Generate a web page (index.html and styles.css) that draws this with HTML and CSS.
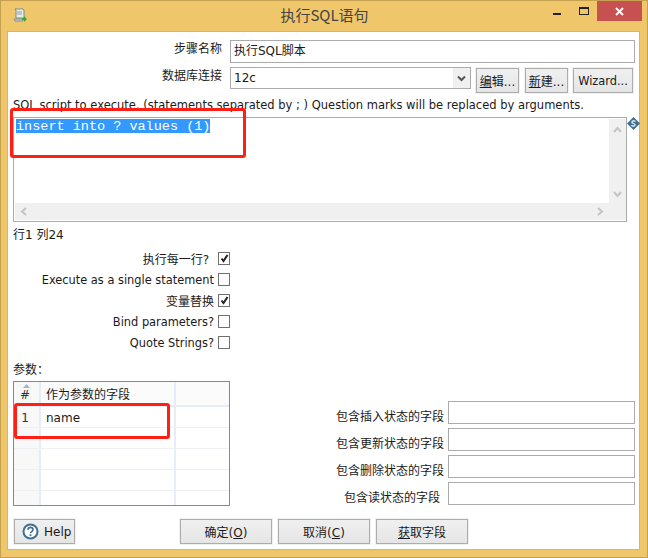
FILE: index.html
```html
<!DOCTYPE html>
<html lang="zh">
<head>
<meta charset="utf-8">
<title>执行SQL语句</title>
<link rel="stylesheet" href="styles.css">
</head>
<body>
<div class="window">
  <header class="titlebar">
    <svg class="app-icon" width="14" height="15" viewBox="0 0 14 15">
      <path d="M2 1h8l1 1v8H3V2z" fill="#e8ecec" stroke="#7f8b8b"/>
      <path d="M1 11h9v2H2z" fill="#d5dcdc" stroke="#7f8b8b"/>
      <path d="M4 4h5M4 6h5" stroke="#8fa0a0"/>
      <path d="M9 10h2V8l3 3-3 3v-2H9z" fill="#3fa535"/>
    </svg>
    <div class="title">执行SQL语句</div>
    <div class="win-controls">
      <span class="win-min"></span>
      <span class="win-max"></span>
      <span class="win-close">
        <svg width="11" height="11" viewBox="0 0 11 11"><path d="M2 2l7 7M9 2l-7 7" stroke="#fff" stroke-width="2"/></svg>
      </span>
    </div>
  </header>

  <main class="client">
    <div class="form-row name-row">
      <label class="top-label">步骤名称</label>
      <div class="input grow">执行SQL脚本</div>
    </div>
    <div class="form-row conn-row">
      <label class="top-label">数据库连接</label>
      <div class="input combo">
        <span class="combo-value">12c</span>
        <span class="combo-btn">
          <svg width="9" height="7" viewBox="0 0 9 7"><path d="M1 1.5l3.5 3.5L8 1.5" fill="none" stroke="#555" stroke-width="2"/></svg>
        </span>
      </div>
      <button class="btn small"><u>编</u>辑...</button>
      <button class="btn small"><u>新</u>建...</button>
      <button class="btn wizard latin">Wizard...</button>
    </div>

    <div class="sql-label">SQL script to execute. (statements separated by ; ) Question marks will be replaced by arguments.</div>

    <div class="sql-wrap">
      <div class="sql-box">
        <div class="sql-main">
          <div class="sql-text"><span class="selected">insert into ? values (1)</span></div>
          <div class="hscroll">
            <svg width="8" height="9" viewBox="0 0 8 9"><path d="M6 1L2 4.5 6 8" fill="none" stroke="#c4c4c4" stroke-width="2"/></svg>
            <svg width="8" height="9" viewBox="0 0 8 9"><path d="M2 1l4 3.5L2 8" fill="none" stroke="#c4c4c4" stroke-width="2"/></svg>
          </div>
        </div>
        <div class="vscroll">
          <svg width="9" height="8" viewBox="0 0 9 8"><path d="M1 6l3.5-4L8 6" fill="none" stroke="#c4c4c4" stroke-width="2"/></svg>
          <svg width="9" height="8" viewBox="0 0 9 8"><path d="M1 2l3.5 4L8 2" fill="none" stroke="#c4c4c4" stroke-width="2"/></svg>
        </div>
      </div>
      <svg class="var-icon" width="13" height="13" viewBox="0 0 13 13">
        <path d="M6.5 0L13 6.5 6.5 13 0 6.5z" fill="#3f6f92"/>
        <path d="M8.5 4.5C8 3.8 5 3.4 4.8 5c-.2 1.700 3.600 1.300 3.400 3-.2 1.500-3.200 1.300-3.800.4" fill="none" stroke="#fff" stroke-width="1.100"/>
      </svg>
      <div class="mark mark-sql"></div>
    </div>

    <div class="position">行1 列24</div>

    <div class="checks">
      <div class="check-row"><span class="check-label indent">执行每一行?</span><span class="checkbox"><svg width="9" height="9" viewBox="0 0 9 9"><path d="M1.500 4.500l2 2.500 4-6" fill="none" stroke="#222" stroke-width="2"/></svg></span></div>
      <div class="check-row"><span class="check-label latin">Execute as a single statement</span><span class="checkbox"></span></div>
      <div class="check-row"><span class="check-label">变量替换</span><span class="checkbox"><svg width="9" height="9" viewBox="0 0 9 9"><path d="M1.500 4.500l2 2.500 4-6" fill="none" stroke="#222" stroke-width="2"/></svg></span></div>
      <div class="check-row"><span class="check-label latin">Bind parameters?</span><span class="checkbox"></span></div>
      <div class="check-row"><span class="check-label latin">Quote Strings?</span><span class="checkbox"></span></div>
    </div>

    <div class="params-label">参数：</div>

    <div class="params">
      <div class="table">
        <div class="tr th">
          <div class="td c1"><svg class="sort" width="7" height="4" viewBox="0 0 7 4"><path d="M0 4l3.500-4L7 4z" fill="#9fb6cc"/></svg>#</div>
          <div class="td c2">作为参数的字段</div>
          <div class="td c3"></div>
        </div>
        <div class="tr"><div class="td c1">1</div><div class="td c2">name</div><div class="td c3"></div></div>
        <div class="tr"><div class="td c1"></div><div class="td c2"></div><div class="td c3"></div></div>
        <div class="tr"><div class="td c1"></div><div class="td c2"></div><div class="td c3"></div></div>
        <div class="tr"><div class="td c1"></div><div class="td c2"></div><div class="td c3"></div></div>
        <div class="tr last"><div class="td c1"></div><div class="td c2"></div><div class="td c3"></div></div>
        <div class="mark mark-name"></div>
      </div>
      <div class="status-fields">
        <div class="status-row"><label>包含插入状态的字段</label><div class="input status"></div></div>
        <div class="status-row"><label>包含更新状态的字段</label><div class="input status"></div></div>
        <div class="status-row"><label>包含删除状态的字段</label><div class="input status"></div></div>
        <div class="status-row"><label class="inset">包含读状态的字段</label><div class="input status"></div></div>
      </div>
    </div>

    <footer class="actions">
      <button class="btn help">
        <svg width="17" height="17" viewBox="0 0 17 17"><circle cx="8.500" cy="8.500" r="7" fill="#fff" stroke="#3f6f92" stroke-width="2"/><path d="M6 6.800c0-3.200 5-3.200 5 0 0 1.800-2.500 1.700-2.500 3.400" fill="none" stroke="#3f6f92" stroke-width="1.600"/><rect x="7.600" y="11.300" width="1.800" height="1.800" fill="#3f6f92"/></svg>
        Help
      </button>
      <div class="main-actions">
        <button class="btn action">确定(<u>O</u>)</button>
        <button class="btn action">取消(<u>C</u>)</button>
        <button class="btn action"><u>获</u>取字段</button>
      </div>
    </footer>
  </main>
</div>
</body>
</html>
```
FILE: styles.css
```css
* { box-sizing: border-box; }
html, body { margin: 0; padding: 0; }
body {
  width: 648px;
  height: 558px;
  overflow: hidden;
  font-family: "DejaVu Sans", "Noto Sans CJK SC", sans-serif;
  font-size: 12px;
  color: #1a1a1a;
}
.latin { font-size: 11.4px; }
.window {
  width: 648px;
  height: 558px;
  background: #efc669;
  border: 1px solid #c4a050;
  display: flex;
  flex-direction: column;
  padding: 0 7px 7px 6px;
}
.titlebar {
  height: 30px;
  flex: none;
  display: flex;
  position: relative;
  padding: 7px 0 0 6px;
}
.app-icon { flex: none; }
.title {
  position: absolute;
  left: 0;
  right: 0;
  top: 5px;
  text-align: center;
  padding-left: 2px;
  font-size: 15px;
  line-height: 18px;
  color: #444;
  font-family: "Noto Sans CJK SC", sans-serif;
}
.win-controls {
  margin-left: auto;
  margin-top: -7px;
  margin-right: -2px;
  display: flex;
  height: 20px;
  position: relative;
}
.win-min {
  width: 8px;
  height: 2px;
  background: #222;
  margin-top: 12px;
  margin-right: 18px;
}
.win-max {
  width: 10px;
  height: 8px;
  border: 1px solid #222;
  border-top-width: 2px;
  margin-top: 6px;
  margin-right: 8px;
}
.win-close {
  width: 45px;
  height: 20px;
  background: #c75050;
  display: flex;
  align-items: center;
  justify-content: center;
}
.client {
  flex: 1;
  background: #fff;
  border: 1px solid #d8b864;
  padding: 8px 4px 0 5px;
  display: flex;
  flex-direction: column;
  min-height: 0;
}
.form-row { display: flex; }
.name-row { height: 23px; margin-bottom: 4px; }
.conn-row { height: 27px; }
.top-label {
  width: 217px;
  flex: none;
  text-align: right;
  padding-right: 8px;
  line-height: 18px;
}
.input {
  border: 1px solid #ababab;
  background: #fff;
  height: 23px;
  line-height: 21px;
  padding-left: 3px;
}
.grow { flex: 1; }
.combo {
  width: 241px;
  height: 22px;
  display: flex;
  justify-content: space-between;
  padding: 0 0 0 3px;
  line-height: 20px;
  margin-right: 4px;
}
.combo-btn {
  width: 17px;
  height: 20px;
  background: #f0f0f0;
  display: flex;
  align-items: center;
  justify-content: center;
}
.btn {
  font-family: inherit;
  font-size: 12px;
  color: inherit;
  border: 1px solid #acacac;
  background: linear-gradient(#f0f0f0, #e5e5e5);
  box-shadow: 0 0 0 1px #f0f0f0;
  padding: 0;
  height: 25px;
}
.btn.latin { font-size: 11.4px; }
.small { width: 43px; margin: 1px 5px 0 1px; }
.wizard { width: 60px; margin: 1px 0 0 0; }
.sql-label {
  height: 22px;
  line-height: 20px;
  margin-top: 1px;
  white-space: nowrap;
  font-size: 11.5px;
}
.sql-wrap {
  display: flex;
  position: relative;
  height: 105px;
  flex: none;
}
.sql-box {
  width: 614px;
  flex: none;
  height: 105px;
  border: 1px solid #ababab;
  display: flex;
  padding: 1px 0 1px 1px;
}
.sql-main { flex: 1; display: flex; flex-direction: column; }
.sql-text {
  flex: 1;
  font-family: "Liberation Mono", monospace;
  font-size: 13.500px;
  line-height: 15px;
  padding: 0 0 0 1px;
  white-space: pre;
}
.selected { background: #3399ff; color: #fff; display: inline-block; height: 14px; }
.hscroll {
  height: 17px;
  background: #f0f0f0;
  display: flex;
  justify-content: space-between;
  align-items: center;
  padding: 0 5px;
}
.vscroll {
  width: 17px;
  background: #f0f0f0;
  display: flex;
  flex-direction: column;
  justify-content: space-between;
  align-items: center;
  padding: 7px 0 22px;
}
.var-icon { flex: none; }
.mark {
  position: absolute;
  border: 3px solid #ff2015;
  border-radius: 3px;
  pointer-events: none;
}
.mark-sql { left: -3px; top: -9px; width: 236px; height: 50px; }
.position {
  height: 26px;
  line-height: 25px;
  padding-top: 1px;
}
.checks { display: flex; flex-direction: column; height: 115px; }
.check-row {
  height: 21px;
  display: flex;
  justify-content: flex-end;
  align-items: center;
  width: 217px;
  flex: none;
}
.check-label { margin-right: 4px; white-space: nowrap; }
.indent { margin-right: 9px; }
.checkbox {
  width: 12px;
  height: 13px;
  border: 1px solid #707070;
  display: flex;
  align-items: center;
  justify-content: center;
  flex: none;
}
.params-label {
  height: 18px;
  line-height: 12px;
  font-family: "Noto Sans CJK TC", sans-serif;
}
.params { display: flex; position: relative; height: 125px; flex: none; }
.table {
  width: 217px;
  height: 125px;
  border: 1px solid #888;
  position: relative;
  flex: none;
}
.tr { display: flex; height: 21px; border-bottom: 1px solid #eef0f3; }
.th { height: 25px; background: #fbfbfb; border-bottom: 2px solid #e6edf7; }
.tr.last { border-bottom: 0; height: 14px; }
.td { line-height: 22px; }
.c1 {
  width: 27px;
  background: #f8f8f8;
  border-right: 2px solid #e6edf7;
  position: relative;
  text-align: center;
  padding-right: 3px;
  color: #333;
}
.c2 { width: 135px; padding-left: 5px; border-right: 2px solid #e6edf7; }
.c3 { flex: 1; }
.th .td { line-height: 26px; }
.sort { position: absolute; left: 9px; top: 2px; }
.mark-name { left: 0; top: 21px; width: 156px; height: 36px; }
.status-fields {
  margin-left: auto;
  padding-top: 20px;
  display: flex;
  flex-direction: column;
  gap: 4px;
}
.status-row { display: flex; justify-content: flex-end; align-items: center; height: 23px; }
.status-row label { margin: 6px 4px 0 0; }
.status-row label.inset { margin-right: 8px; }
.input.status { width: 187px; }
.actions { display: flex; margin-top: 13px; padding-left: 1px; }
.help {
  width: 61px;
  display: flex;
  align-items: center;
  gap: 5px;
  padding-left: 7px;
}
.main-actions { display: flex; gap: 6px; margin-left: 105px; }
.action { width: 92px; }
```
